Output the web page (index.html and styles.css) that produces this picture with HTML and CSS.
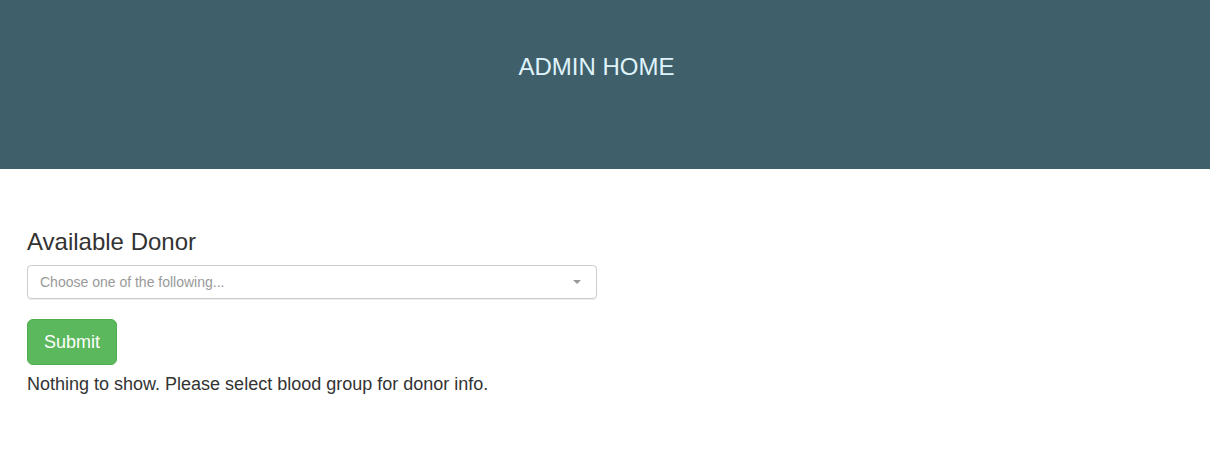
FILE: index.html
```html
<!DOCTYPE html>
<html>
<head>
<meta charset="utf-8">
<link rel="stylesheet" href="styles.css">
</head>
<body>
<header class="top">
  <h1 class="top-title">ADMIN HOME</h1>
</header>
<main class="content">
  <h3 class="section-title">Available Donor</h3>
  <div class="select">
    <span class="select-text">Choose one of the following...</span>
    <span class="select-arrow"></span>
  </div>
  <button class="btn-submit" type="button">Submit</button>
  <p class="note">Nothing to show. Please select blood group for donor info.</p>
</main>
</body>
</html>
```
FILE: styles.css
```css
html, body {
  margin: 0;
  padding: 0;
  background: #fff;
  font-family: "Liberation Sans", Arial, sans-serif;
  color: #333;
}
.top {
  background: #3f606b;
  height: 169px;
  display: flex;
  justify-content: center;
  align-items: flex-start;
  padding-right: 17px;
}
.top-title {
  margin: 53px 0 0;
  font-size: 24px;
  font-weight: normal;
  line-height: 28px;
  color: #dff3fa;
}
.content {
  padding: 59px 27px 0;
}
.section-title {
  margin: 0 0 9px;
  font-size: 24px;
  font-weight: normal;
  line-height: 28px;
  color: #333;
}
.select {
  box-sizing: border-box;
  width: 570px;
  height: 34px;
  border: 1px solid #ccc;
  border-radius: 4px;
  box-shadow: 0 1px 1px rgba(0,0,0,0.075);
  display: flex;
  align-items: center;
  justify-content: space-between;
  padding: 0 12px;
}
.select-text {
  font-size: 14px;
  color: #999;
}
.select-arrow {
  width: 0;
  height: 0;
  border-left: 4px solid transparent;
  border-right: 4px solid transparent;
  border-top: 4px solid #999;
  margin-right: 3px;
}
.btn-submit {
  display: block;
  margin-top: 20px;
  font-family: inherit;
  font-size: 18px;
  line-height: 24px;
  padding: 10px 16px;
  background: #5cb85c;
  border: 1px solid #4cae4c;
  border-radius: 6px;
  color: #fff;
}
.note {
  margin: 7px 0 0;
  font-size: 18px;
  line-height: 24px;
  color: #333;
}
```
